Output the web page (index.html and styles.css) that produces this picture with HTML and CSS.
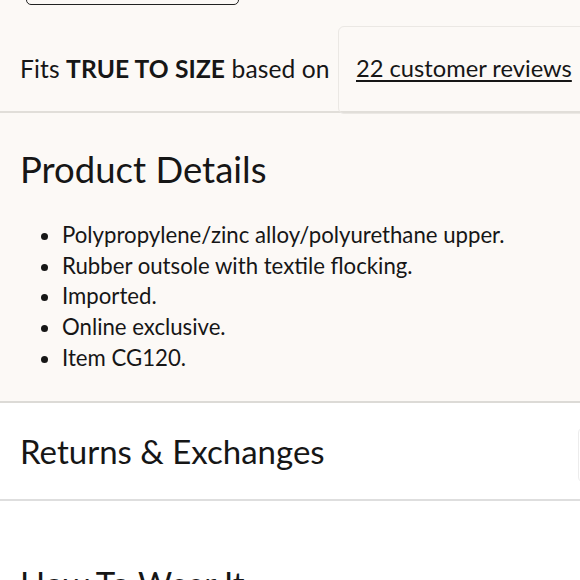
FILE: index.html
```html
<!DOCTYPE html>
<html>
<head>
<meta charset="utf-8">
<link rel="stylesheet" href="styles.css">
</head>
<body>
<div class="page">
  <section class="fit">
    <div class="btn-edge"></div>
    <div class="fit-row">
      <p class="fit-text">Fits <strong>TRUE TO SIZE</strong> based on</p>
      <div class="reviews-box"><a class="reviews-link" href="#">22 customer reviews</a></div>
    </div>
  </section>
  <section class="details">
    <h2 class="details-title">Product Details</h2>
    <ul class="details-list">
      <li>Polypropylene/zinc alloy/polyurethane upper.</li>
      <li>Rubber outsole with textile flocking.</li>
      <li>Imported.</li>
      <li>Online exclusive.</li>
      <li>Item CG120.</li>
    </ul>
  </section>
  <section class="accordion">
    <h2 class="acc-title">Returns &amp; Exchanges</h2>
    <div class="acc-box"></div>
  </section>
  <section class="wear">
    <h2 class="acc-title">How To Wear It</h2>
  </section>
</div>
</body>
</html>
```
FILE: styles.css
```css
html, body { margin: 0; padding: 0; }
body { background: #ffffff; font-family: Lato, "Open Sans", sans-serif; color: #161616; }
.page { width: 580px; height: 580px; overflow: hidden; }
.fit { background: #fcf9f6; position: relative; height: 111px; border-bottom: 2px solid #e1ded9; }
.btn-edge { position: absolute; left: 26px; top: -20px; width: 211px; height: 23px; border: 1.5px solid #222; border-radius: 5px; }
.fit-row { display: flex; align-items: center; padding-left: 20px; padding-top: 26px; height: 85px; }
.fit-text { margin: 0; font-size: 24.6px; line-height: 30px; white-space: nowrap; letter-spacing: 0.1px; }
.fit-text strong { font-weight: 700; }
.reviews-box { position: absolute; left: 338px; top: 26px; width: 260px; height: 88px; border: 1px solid #ebe8e4; border-radius: 6px; box-sizing: border-box; padding-left: 17px; padding-top: 0; display: flex; align-items: center; padding-bottom: 4px; }
.reviews-link { color: #161616; font-size: 23.7px; line-height: 30px; text-decoration: underline; text-underline-offset: 3px; text-decoration-thickness: 1.5px; white-space: nowrap; }
.details { background: #fcf9f6; height: 288px; border-bottom: 2px solid #dcdad6; padding: 0 20px; box-sizing: content-box; }
.details-title { margin: 0; padding-top: 36px; font-size: 36.5px; font-weight: 400; line-height: 40px; }
.details-list { margin: 31px 0 0; padding-left: 42px; font-size: 22.2px; line-height: 30.7px; }
.accordion { position: relative; height: 96px; border-bottom: 2px solid #dedede; display: flex; align-items: center; padding-left: 20px; }
.acc-title { margin: 0; font-size: 33px; font-weight: 400; }
.acc-box { position: absolute; left: 578px; top: 24px; width: 40px; height: 54px; border: 1px solid #ececec; border-radius: 6px; }
.wear { padding: 62px 20px 0; }
```
